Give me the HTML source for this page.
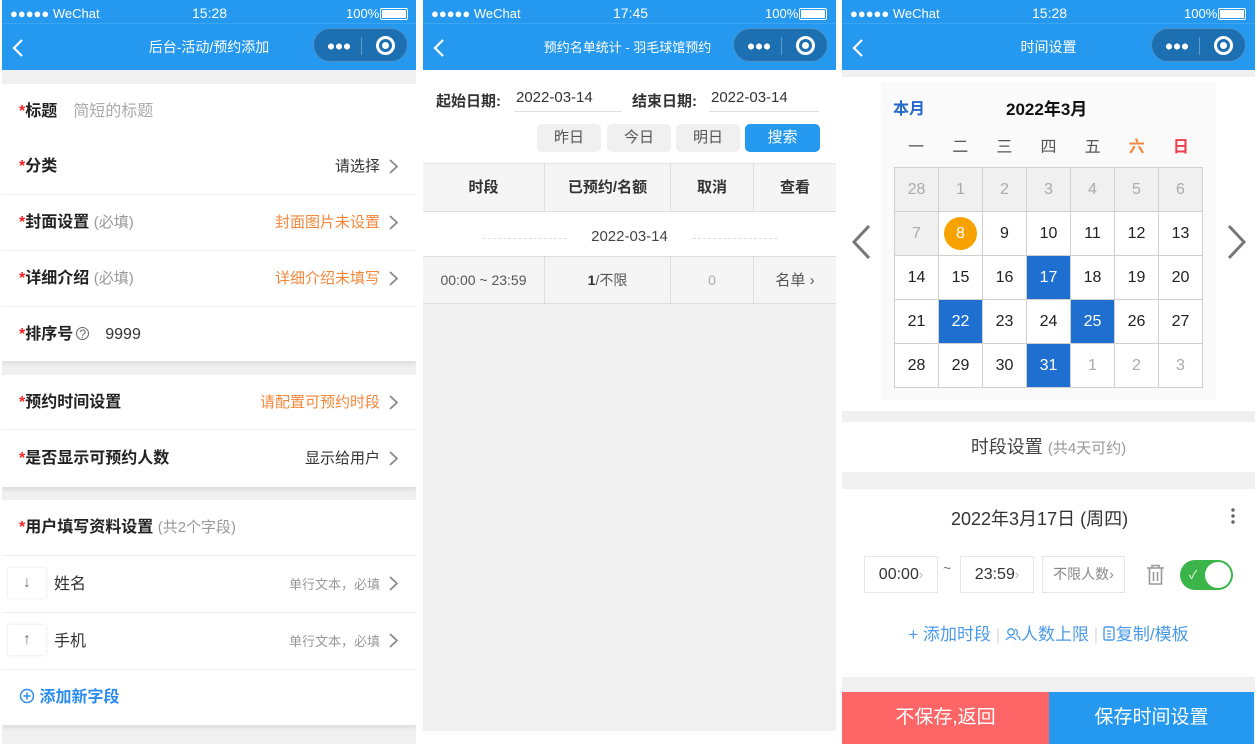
<!DOCTYPE html>
<html><head><meta charset="utf-8"><style>
*{margin:0;padding:0;box-sizing:border-box}
body{width:1257px;height:744px;position:relative;background:#fff;font-family:"Liberation Sans","Noto Sans CJK SC",sans-serif;overflow:hidden;color:#333}
.a{position:absolute}
.panel{position:absolute;top:0;height:744px;background:#f0f0f0;overflow:hidden}
.sb{position:absolute;left:0;right:0;top:0;height:27px;background:#2599ef;color:#fff;font-size:13px}
.nav{position:absolute;left:0;right:0;top:23px;height:47px;background:#2599ef;color:#fff;font-size:14px;text-align:center;line-height:47px;border-top:1px solid #3aa5f2}
.cap{position:absolute;top:4px;width:95px;height:34px;border-radius:17px;background:#1c6fb0;border:1px solid #4a93cc}
.dots{position:absolute;left:13px;top:14px;width:24px;height:7px;background:radial-gradient(circle,#fff 2.8px,transparent 3.2px) 0 0/8px 7px}
.row{position:absolute;left:0;right:0;background:#fff;border-bottom:1px solid #eee;font-size:16px;line-height:55px;padding-left:17px}
.row b{font-weight:bold;color:#222}
.st{color:#f22}
.r{position:absolute;right:36px;top:0;font-size:15px}
.or{color:#f5873a}
.gr{color:#999;font-weight:normal}
.chev{position:absolute;right:18px;top:20px}
.sh{box-shadow:0 3px 4px rgba(0,0,0,.08)}
.cal{position:absolute;left:894px;top:167px;width:309px;height:221px;display:grid;grid-template-columns:repeat(7,1fr);grid-template-rows:repeat(5,1fr);border-top:1px solid #d0d0d0;border-left:1px solid #d0d0d0}
.cal div{border-right:1px solid #d0d0d0;border-bottom:1px solid #d0d0d0;display:flex;align-items:center;justify-content:center;font-size:16px;color:#222;background:#fff}
.cal .o{background:#f0f0f0;color:#aaa}
.cal .g{color:#aaa}
.cal .s{background:#1e6fd0;color:#fff}
.btn{position:absolute;height:28px;top:124px;width:64px;border-radius:5px;background:#f0f0f0;text-align:center;line-height:28px;font-size:15px;color:#555}
.th{position:absolute;top:0;height:48px;line-height:48px;text-align:center;font-weight:bold;font-size:15px;color:#333;border-right:1px solid #ddd}
.td{position:absolute;top:0;height:47px;line-height:47px;text-align:center;font-size:14px;color:#555;border-right:1px solid #ddd}
.tb{position:absolute;top:556px;width:74px;height:37px;border:1px solid #e6e6e6;font-size:16px;line-height:35px;text-align:center;color:#333}
</style></head><body>

<!-- PANEL 1 -->
<div class="panel" style="left:2px;width:414px">
 <div class="sb"><span class="a" style="left:8px;top:6px">●●●●● WeChat</span><span class="a" style="left:190px;top:5px;font-size:14px">15:28</span><span class="a" style="left:344px;top:6px">100%</span><span class="a" style="left:378px;top:8px;width:28px;height:12px;border:1px solid #fff;border-radius:2px;padding:1px"><span style="display:block;width:100%;height:100%;background:#fff"></span></span></div>
 <div class="nav"><svg class="a" style="left:10px;top:15px" width="12" height="18"><path d="M10 1 L2 9 L10 17" stroke="#fff" stroke-width="2.2" fill="none"/></svg>后台-活动/预约添加
  <div class="cap" style="left:311px"><span class="dots"></span><span class="a" style="left:47px;top:8px;width:1px;height:18px;background:#5b9bd0"></span><span class="a" style="left:62px;top:7px;width:19px;height:19px;border:3px solid #fff;border-radius:50%"><span class="a" style="left:3px;top:3px;width:7px;height:7px;background:#fff;border-radius:50%"></span></span></div>
 </div>
 <div class="row" style="top:84px"><b><span class="st">*</span>标题</b><span style="color:#aaa;margin-left:16px">简短的标题</span></div>
 <div class="row" style="top:139px;height:56px"><b><span class="st">*</span>分类</b><span class="r">请选择</span><svg class="chev" width="9" height="15"><path d="M1 1 L8 7.5 L1 14" stroke="#888" stroke-width="1.8" fill="none"/></svg></div>
 <div class="row" style="top:195px;height:56px"><b><span class="st">*</span>封面设置</b> <span class="gr" style="font-size:15px">(必填)</span><span class="r or">封面图片未设置</span><svg class="chev" width="9" height="15"><path d="M1 1 L8 7.5 L1 14" stroke="#888" stroke-width="1.8" fill="none"/></svg></div>
 <div class="row" style="top:251px;height:56px"><b><span class="st">*</span>详细介绍</b> <span class="gr" style="font-size:15px">(必填)</span><span class="r or">详细介绍未填写</span><svg class="chev" width="9" height="15"><path d="M1 1 L8 7.5 L1 14" stroke="#888" stroke-width="1.8" fill="none"/></svg></div>
 <div class="row sh" style="top:307px;height:54px;border:0"><b><span class="st">*</span>排序号</b><span style="font-size:12px;color:#666;border:1px solid #666;border-radius:50%;display:inline-block;width:13px;height:13px;line-height:12px;text-align:center;margin-left:3px;vertical-align:1px">?</span><span style="margin-left:16px">9999</span></div>
 <div class="row" style="top:375px;height:55px"><b><span class="st">*</span>预约时间设置</b><span class="r or">请配置可预约时段</span><svg class="chev" width="9" height="15"><path d="M1 1 L8 7.5 L1 14" stroke="#888" stroke-width="1.8" fill="none"/></svg></div>
 <div class="row sh" style="top:430px;height:57px;line-height:57px;border:0"><b><span class="st">*</span>是否显示可预约人数</b><span class="r">显示给用户</span><svg class="chev" width="9" height="15" style="top:21px"><path d="M1 1 L8 7.5 L1 14" stroke="#888" stroke-width="1.8" fill="none"/></svg></div>
 <div class="row" style="top:500px;height:56px"><b><span class="st">*</span>用户填写资料设置</b> <span class="gr" style="font-size:15px">(共2个字段)</span></div>
 <div class="row" style="top:556px;height:57px;line-height:57px;padding-left:52px"><span class="a" style="left:6px;top:12px;width:38px;height:30px;box-shadow:0 0 3px rgba(0,0,0,.12);text-align:center;line-height:30px;color:#777">↓</span>姓名<span class="r" style="font-size:13px;color:#999">单行文本，必填</span><svg class="chev" width="9" height="15"><path d="M1 1 L8 7.5 L1 14" stroke="#888" stroke-width="1.8" fill="none"/></svg></div>
 <div class="row" style="top:613px;height:57px;line-height:57px;padding-left:52px"><span class="a" style="left:6px;top:12px;width:38px;height:30px;box-shadow:0 0 3px rgba(0,0,0,.12);text-align:center;line-height:30px;color:#777">↑</span>手机<span class="r" style="font-size:13px;color:#999">单行文本，必填</span><svg class="chev" width="9" height="15"><path d="M1 1 L8 7.5 L1 14" stroke="#888" stroke-width="1.8" fill="none"/></svg></div>
 <div class="row sh" style="top:670px;height:55px;border:0;color:#2a8cf0;font-weight:bold"><svg width="16" height="16" style="vertical-align:-2px"><circle cx="8" cy="8" r="6.5" stroke="#2a8cf0" stroke-width="1.5" fill="none"/><path d="M4.5 8 H11.5 M8 4.5 V11.5" stroke="#2a8cf0" stroke-width="1.5"/></svg> 添加新字段</div>
</div>

<!-- PANEL 2 -->
<div class="panel" style="left:423px;width:413px;height:731px">
 <div class="sb"><span class="a" style="left:8px;top:6px">●●●●● WeChat</span><span class="a" style="left:190px;top:5px;font-size:14px">17:45</span><span class="a" style="left:342px;top:6px">100%</span><span class="a" style="left:376px;top:8px;width:28px;height:12px;border:1px solid #fff;border-radius:2px;padding:1px"><span style="display:block;width:100%;height:100%;background:#fff"></span></span></div>
 <div class="nav" style="font-size:13px"><svg class="a" style="left:10px;top:15px" width="12" height="18"><path d="M10 1 L2 9 L10 17" stroke="#fff" stroke-width="2.2" fill="none"/></svg><span style="margin-left:-4px">预约名单统计 - 羽毛球馆预约</span>
  <div class="cap" style="left:310px"><span class="dots"></span><span class="a" style="left:47px;top:8px;width:1px;height:18px;background:#5b9bd0"></span><span class="a" style="left:62px;top:7px;width:19px;height:19px;border:3px solid #fff;border-radius:50%"><span class="a" style="left:3px;top:3px;width:7px;height:7px;background:#fff;border-radius:50%"></span></span></div>
 </div>
 <div class="a" style="left:0;top:70px;width:413px;height:93px;background:#fff">
  <span class="a" style="left:13px;top:20px;font-size:15px;font-weight:bold">起始日期:</span><span class="a" style="left:91px;top:19px;width:108px;border-bottom:1px solid #ddd;font-size:15px;padding-bottom:5px;padding-left:2px">2022-03-14</span>
  <span class="a" style="left:209px;top:20px;font-size:15px;font-weight:bold">结束日期:</span><span class="a" style="left:286px;top:19px;width:110px;border-bottom:1px solid #ddd;font-size:15px;padding-bottom:5px;padding-left:2px">2022-03-14</span>
 </div>
 <div class="btn" style="left:114px">昨日</div><div class="btn" style="left:184px">今日</div><div class="btn" style="left:253px">明日</div><div class="btn" style="left:322px;width:75px;background:#2599ef;color:#fff">搜索</div>
 <div class="a" style="left:0;top:163px;width:413px;height:49px;background:#f5f5f5;border-bottom:1px solid #ddd;border-top:1px solid #e5e5e5">
  <div class="th" style="left:0;width:122px">时段</div><div class="th" style="left:122px;width:126px">已预约/名额</div><div class="th" style="left:248px;width:83px">取消</div><div class="th" style="left:331px;width:82px;border:0">查看</div>
 </div>
 <div class="a" style="left:0;top:212px;width:413px;height:45px;background:#fff;border-bottom:1px solid #ddd;text-align:center;line-height:50px;font-size:15px;color:#444"><span class="a" style="left:60px;top:26px;width:84px;border-top:1px dashed #ddd"></span>2022-03-14<span class="a" style="left:270px;top:26px;width:84px;border-top:1px dashed #ddd"></span></div>
 <div class="a" style="left:0;top:257px;width:413px;height:47px;background:#f5f5f5;border-bottom:1px solid #ddd">
  <div class="td" style="left:0;width:122px">00:00 ~ 23:59</div><div class="td" style="left:122px;width:126px"><b style="color:#333">1</b>/不限</div><div class="td" style="left:248px;width:83px;color:#aaa">0</div><div class="td" style="left:331px;width:82px;border:0;font-size:15px">名单 ›</div>
 </div>
</div>

<!-- PANEL 3 -->
<div class="panel" style="left:842px;width:413px">
 <div class="sb"><span class="a" style="left:8px;top:6px">●●●●● WeChat</span><span class="a" style="left:190px;top:5px;font-size:14px">15:28</span><span class="a" style="left:342px;top:6px">100%</span><span class="a" style="left:376px;top:8px;width:28px;height:12px;border:1px solid #fff;border-radius:2px;padding:1px"><span style="display:block;width:100%;height:100%;background:#fff"></span></span></div>
 <div class="nav"><svg class="a" style="left:10px;top:15px" width="12" height="18"><path d="M10 1 L2 9 L10 17" stroke="#fff" stroke-width="2.2" fill="none"/></svg>时间设置
  <div class="cap" style="left:309px"><span class="dots"></span><span class="a" style="left:47px;top:8px;width:1px;height:18px;background:#5b9bd0"></span><span class="a" style="left:62px;top:7px;width:19px;height:19px;border:3px solid #fff;border-radius:50%"><span class="a" style="left:3px;top:3px;width:7px;height:7px;background:#fff;border-radius:50%"></span></span></div>
 </div>
 <div class="a" style="left:0;top:77px;width:413px;height:334px;background:#fff"></div>
 <div class="a" style="left:39px;top:82px;width:335px;height:318px;background:#fafafa"></div>
 <span class="a" style="left:51px;top:95px;font-size:16px;font-weight:bold;color:#2468c8">本月</span>
 <span class="a" style="left:164px;top:95px;font-size:17px;font-weight:bold;color:#111">2022年3月</span>
 <div class="a" style="left:52px;top:133px;width:309px;display:flex;font-size:16px;color:#555"><span style="flex:1;text-align:center">一</span><span style="flex:1;text-align:center">二</span><span style="flex:1;text-align:center">三</span><span style="flex:1;text-align:center">四</span><span style="flex:1;text-align:center">五</span><span style="flex:1;text-align:center;color:#f5873a;font-weight:bold">六</span><span style="flex:1;text-align:center;color:#f03c4c;font-weight:bold">日</span></div>
 <svg class="a" style="left:8px;top:224px" width="22" height="36"><path d="M19 2 L4 18 L19 34" stroke="#777" stroke-width="3" fill="none"/></svg>
 <svg class="a" style="left:384px;top:224px" width="22" height="36"><path d="M3 2 L18 18 L3 34" stroke="#777" stroke-width="3" fill="none"/></svg>
</div>
<div class="cal">
 <div class="o">28</div><div class="o">1</div><div class="o">2</div><div class="o">3</div><div class="o">4</div><div class="o">5</div><div class="o">6</div>
 <div class="o">7</div><div><span style="width:33px;height:33px;border-radius:50%;background:#f8a200;color:#fff;display:flex;align-items:center;justify-content:center">8</span></div><div>9</div><div>10</div><div>11</div><div>12</div><div>13</div>
 <div>14</div><div>15</div><div>16</div><div class="s">17</div><div>18</div><div>19</div><div>20</div>
 <div>21</div><div class="s">22</div><div>23</div><div>24</div><div class="s">25</div><div>26</div><div>27</div>
 <div>28</div><div>29</div><div>30</div><div class="s">31</div><div class="g">1</div><div class="g">2</div><div class="g">3</div>
</div>
<div class="a" style="left:842px;top:422px;width:413px;height:50px;background:#fff;text-align:center;line-height:50px;font-size:18px;color:#444">时段设置 <span style="font-size:15px;color:#999">(共4天可约)</span></div>
<div class="a" style="left:842px;top:489px;width:413px;height:188px;background:#fff"></div>
<span class="a" style="left:951px;top:505px;font-size:18px;color:#333">2022年3月17日 (周四)</span>
<span class="a" style="left:1231px;top:507px;width:4px;height:18px;background:radial-gradient(circle,#666 1.5px,transparent 2px) 0 0/4px 6px"></span>
<div class="tb" style="left:864px">00:00<span style="color:#bbb;font-size:13px">›</span></div>
<span class="a" style="left:943px;top:560px;color:#777;font-size:14px">~</span>
<div class="tb" style="left:960px">23:59<span style="color:#bbb;font-size:13px">›</span></div>
<div class="tb" style="left:1042px;width:83px;font-size:14px;color:#888">不限人数›</div>
<svg class="a" style="left:1146px;top:564px" width="19" height="21"><path d="M1 4 H18 M6 4 V1.5 H13 V4 M3.5 4 V20 H15.5 V4 M7.5 8 V17 M11.5 8 V17" stroke="#999" stroke-width="1.6" fill="none"/></svg>
<div class="a" style="left:1180px;top:560px;width:53px;height:30px;border-radius:15px;background:#3bb54a"><span class="a" style="left:9px;top:6px;color:#fff;font-size:12px">✓</span><span class="a" style="left:25px;top:2px;width:26px;height:26px;border-radius:50%;background:#fff"></span></div>
<div class="a" style="left:842px;top:620px;width:413px;text-align:center;font-size:17px;color:#4a9ae8"><span>+ 添加时段</span> <span style="color:#ddd">|</span> <svg width="16" height="14" style="vertical-align:-1px"><circle cx="6" cy="5" r="3.2" stroke="#4a9ae8" stroke-width="1.3" fill="none"/><path d="M1 13 Q6 7 11 13 M10 2.5 A3 3 0 0 1 11 8 M12 9 Q15 10 15 13" stroke="#4a9ae8" stroke-width="1.3" fill="none"/></svg>人数上限 <span style="color:#ddd">|</span> <svg width="13" height="16" style="vertical-align:-2px"><rect x="1" y="1" width="10" height="13" rx="1.5" stroke="#4a9ae8" stroke-width="1.4" fill="none"/><path d="M4 5 H8 M4 8 H8 M4 11 H8" stroke="#4a9ae8" stroke-width="1.2"/></svg>复制/模板</div>
<div class="a" style="left:842px;top:692px;width:207px;height:52px;background:#fe6566;color:#fff;text-align:center;line-height:52px;font-size:19px">不保存,返回</div>
<div class="a" style="left:1049px;top:692px;width:205px;height:52px;background:#2599ef;color:#fff;text-align:center;line-height:52px;font-size:19px">保存时间设置</div>
</body></html>
